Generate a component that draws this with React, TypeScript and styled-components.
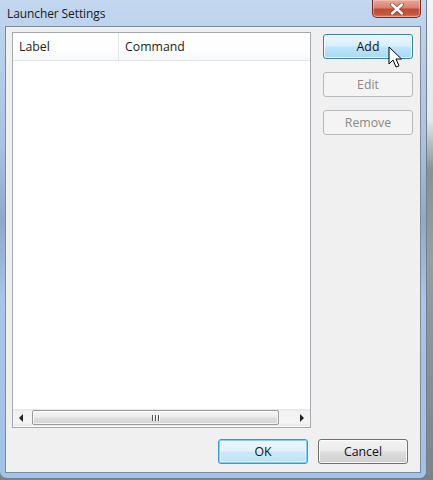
import React from "react";
import styled, { createGlobalStyle } from "styled-components";

const Global = createGlobalStyle`
  html, body { margin: 0; padding: 0; }
  body {
    width: 433px;
    height: 480px;
    overflow: hidden;
    background: linear-gradient(to bottom, #f4f5f6 0px, #e4e6e8 120px, #8d8f92 170px, #9a9c9f 260px, #7f8184 480px);
    font-family: "Open Sans", "Noto Sans", "DejaVu Sans", sans-serif;
  }
`;

const Window = styled.div`
  position: relative;
  box-sizing: border-box;
  width: 427px;
  height: 479px;
  padding: 0 5px 5px 5px;
  display: flex;
  flex-direction: column;
  border-radius: 0 0 7px 7px;
  border-right: 1px solid #6f7f92;
  border-bottom: 1px solid #6f7f92;
  background: linear-gradient(
    to bottom,
    #c3d7ee 0px,
    #bcd2ec 30px,
    #a9c3e2 140px,
    #8fa9c8 220px,
    #a8c6e8 300px,
    #a2c2e6 480px
  );
`;

const TitleBar = styled.div`
  height: 27px;
  display: flex;
  align-items: flex-start;
  justify-content: space-between;
`;

const Title = styled.div`
  padding: 5px 0 0 2px;
  font-size: 12px;
  color: #1a1a1a;
  letter-spacing: -0.1px;
`;

const CloseButton = styled.div`
  box-sizing: border-box;
  width: 49px;
  height: 18px;
  display: flex;
  align-items: center;
  justify-content: center;
  border: 1px solid #7b2a20;
  border-top: none;
  border-radius: 0 0 5px 5px;
  background: linear-gradient(to bottom, #e6a99c 0%, #d8826f 45%, #c24a32 55%, #c8583c 85%, #d98a6a 100%);
  box-shadow: inset 0 0 0 1px rgba(255, 210, 200, 0.45);
`;

const Client = styled.div`
  flex: 1;
  box-sizing: border-box;
  border: 1px solid #7d8a99;
  background: #f0f0f0;
  padding: 5px 7px 8px 6px;
  display: flex;
  flex-direction: column;
`;

const TopRow = styled.div`
  display: flex;
  gap: 12px;
  height: 396px;
`;

const ListView = styled.div`
  box-sizing: border-box;
  width: 300px;
  height: 396px;
  border: 1px solid #a5a9b0;
  background: #ffffff;
  display: flex;
  flex-direction: column;
`;

const Header = styled.div`
  height: 27px;
  display: flex;
  border-bottom: 1px solid #e2e5ea;
  background: linear-gradient(to bottom, #ffffff 0%, #ffffff 55%, #f7f8fa 100%);
`;

const HeaderCell = styled.div<{ $w?: number }>`
  box-sizing: border-box;
  ${(p) => (p.$w ? `width: ${p.$w}px;` : "flex: 1;")}
  padding: 5px 0 0 6px;
  font-size: 12.3px;
  color: #1e1e1e;
  border-right: ${(p) => (p.$w ? "1px solid #e3e7ec" : "none")};
`;

const ListBody = styled.div`
  flex: 1;
`;

const HScroll = styled.div`
  height: 17px;
  display: flex;
  align-items: stretch;
  background: linear-gradient(to bottom, #e6e6e6 0%, #f2f2f2 20%, #f4f4f4 80%, #e9e9e9 100%);
  margin-bottom: 1px;
`;

const ArrowBtn = styled.div`
  width: 17px;
  display: flex;
  align-items: center;
  justify-content: center;
`;

const Track = styled.div`
  flex: 1;
  display: flex;
  align-items: stretch;
  padding: 0 14px 0 2px;
`;

const Thumb = styled.div`
  box-sizing: border-box;
  flex: 1;
  margin: 1px 0;
  border: 1px solid #9c9c9c;
  border-radius: 2px;
  background: linear-gradient(to bottom, #f6f6f6 0%, #ececec 45%, #dedede 55%, #d6d6d6 100%);
  box-shadow: inset 0 0 0 1px rgba(255, 255, 255, 0.7);
  display: flex;
  align-items: center;
  justify-content: center;
`;

const Grip = styled.div`
  display: flex;
  gap: 2px;
  & > span {
    width: 1px;
    height: 6px;
    background: #555;
    box-shadow: 1px 0 0 #fff;
  }
`;

const SideCol = styled.div`
  width: 90px;
  padding-top: 2px;
  display: flex;
  flex-direction: column;
  gap: 13px;
`;

type Variant = "normal" | "hover" | "default" | "disabled";

const Button = styled.div<{ $v: Variant }>`
  position: relative;
  box-sizing: border-box;
  width: 90px;
  height: 25px;
  border-radius: 3px;
  display: flex;
  align-items: center;
  justify-content: center;
  font-size: 12.3px;
  color: ${(p) => (p.$v === "disabled" ? "#8a8a8a" : "#111")};
  border: 1px solid
    ${(p) =>
      p.$v === "hover" ? "#3c7fb1" : p.$v === "default" ? "#3399dd" : p.$v === "disabled" ? "#b5b8bb" : "#707070"};
  background: ${(p) =>
    p.$v === "hover"
      ? "linear-gradient(to bottom, #eaf6fd 0%, #d9f0fc 48%, #bee6fd 52%, #a7d9f5 100%)"
      : p.$v === "default"
      ? "linear-gradient(to bottom, #eef7fc 0%, #e0f1fb 48%, #cbe8f8 52%, #bfe2f6 100%)"
      : p.$v === "disabled"
      ? "#f4f4f4"
      : "linear-gradient(to bottom, #f2f2f2 0%, #ebebeb 48%, #dddddd 52%, #cfcfcf 100%)"};
  box-shadow: ${(p) =>
    p.$v === "default"
      ? "inset 0 0 0 1px #7fd0f5, inset 0 0 0 2px rgba(255,255,255,0.5)"
      : p.$v === "disabled"
      ? "none"
      : "inset 0 0 0 1px rgba(255,255,255,0.8)"};
`;

const BottomRow = styled.div`
  margin-top: 11px;
  padding-right: 5px;
  display: flex;
  justify-content: flex-end;
  gap: 10px;
`;

const Cursor = styled.svg`
  position: absolute;
  left: 64px;
  top: 11px;
  pointer-events: none;
`;

export default function App() {
  return (
    <>
      <Global />
      <Window>
        <TitleBar>
          <Title>Launcher Settings</Title>
          <CloseButton>
            <svg width="16" height="12" viewBox="0 0 16 12">
              <path d="M3 1.5 L13 10.5 M13 1.5 L3 10.5" stroke="#5a3330" strokeWidth="4.2" strokeLinecap="round" opacity="0.55" />
              <path d="M3 1.5 L13 10.5 M13 1.5 L3 10.5" stroke="#ffffff" strokeWidth="2.4" strokeLinecap="round" />
            </svg>
          </CloseButton>
        </TitleBar>
        <Client>
          <TopRow>
            <ListView>
              <Header>
                <HeaderCell $w={106}>Label</HeaderCell>
                <HeaderCell>Command</HeaderCell>
              </Header>
              <ListBody />
              <HScroll>
                <ArrowBtn>
                  <svg width="5" height="8" viewBox="0 0 5 8">
                    <path d="M4 0 L0 4 L4 8 Z" fill="#222" />
                  </svg>
                </ArrowBtn>
                <Track>
                  <Thumb>
                    <Grip>
                      <span />
                      <span />
                      <span />
                    </Grip>
                  </Thumb>
                </Track>
                <ArrowBtn>
                  <svg width="5" height="8" viewBox="0 0 5 8">
                    <path d="M1 0 L5 4 L1 8 Z" fill="#222" />
                  </svg>
                </ArrowBtn>
              </HScroll>
            </ListView>
            <SideCol>
              <Button $v="hover">
                Add
                <Cursor width="16" height="24" viewBox="0 0 16 24">
                  <path
                    d="M1 1 L1 18 L5 14 L8 21 L11 19.8 L8 13 L13.5 13 Z"
                    fill="#ffffff"
                    stroke="#000000"
                    strokeWidth="1"
                    strokeLinejoin="miter"
                  />
                </Cursor>
              </Button>
              <Button $v="disabled">Edit</Button>
              <Button $v="disabled">Remove</Button>
            </SideCol>
          </TopRow>
          <BottomRow>
            <Button $v="default">OK</Button>
            <Button $v="normal">Cancel</Button>
          </BottomRow>
        </Client>
      </Window>
    </>
  );
}
